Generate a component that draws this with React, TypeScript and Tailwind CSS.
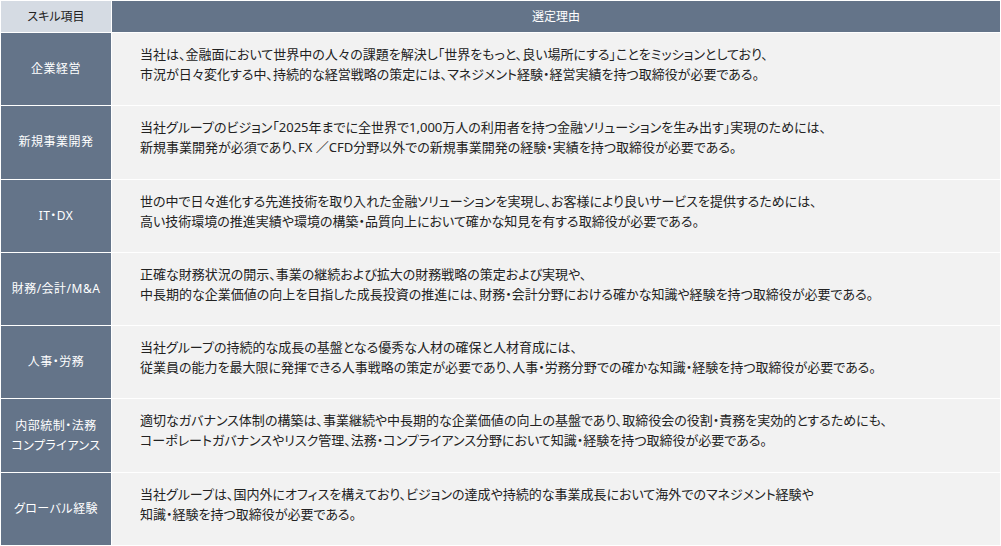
const rows: { skill: string[]; reason: string[] }[] = [
  {
    skill: ['企業経営'],
    reason: [
      '当社は、金融面において世界中の人々の課題を解決し「世界をもっと、良い場所にする」ことをミッションとしており、',
      '市況が日々変化する中、持続的な経営戦略の策定には、マネジメント経験・経営実績を持つ取締役が必要である。',
    ],
  },
  {
    skill: ['新規事業開発'],
    reason: [
      '当社グループのビジョン「2025年までに全世界で1,000万人の利用者を持つ金融ソリューションを生み出す」実現のためには、',
      '新規事業開発が必須であり、FX ／CFD分野以外での新規事業開発の経験・実績を持つ取締役が必要である。',
    ],
  },
  {
    skill: ['IT・DX'],
    reason: [
      '世の中で日々進化する先進技術を取り入れた金融ソリューションを実現し、お客様により良いサービスを提供するためには、',
      '高い技術環境の推進実績や環境の構築・品質向上において確かな知見を有する取締役が必要である。',
    ],
  },
  {
    skill: ['財務/会計/M&A'],
    reason: [
      '正確な財務状況の開示、事業の継続および拡大の財務戦略の策定および実現や、',
      '中長期的な企業価値の向上を目指した成長投資の推進には、財務・会計分野における確かな知識や経験を持つ取締役が必要である。',
    ],
  },
  {
    skill: ['人事・労務'],
    reason: [
      '当社グループの持続的な成長の基盤となる優秀な人材の確保と人材育成には、',
      '従業員の能力を最大限に発揮できる人事戦略の策定が必要であり、人事・労務分野での確かな知識・経験を持つ取締役が必要である。',
    ],
  },
  {
    skill: ['内部統制・法務', 'コンプライアンス'],
    reason: [
      '適切なガバナンス体制の構築は、事業継続や中長期的な企業価値の向上の基盤であり、取締役会の役割・責務を実効的とするためにも、',
      'コーポレートガバナンスやリスク管理、法務・コンプライアンス分野において知識・経験を持つ取締役が必要である。',
    ],
  },
  {
    skill: ['グローバル経験'],
    reason: [
      '当社グループは、国内外にオフィスを構えており、ビジョンの達成や持続的な事業成長において海外でのマネジメント経験や',
      '知識・経験を持つ取締役が必要である。',
    ],
  },
];

export default function App() {
  return (
    <div className="h-[546px] w-[1001px] bg-white p-px font-['Noto_Sans','Noto_Sans_CJK_JP',sans-serif] [font-feature-settings:'palt']">
      <div className="grid h-full grid-cols-[110px_1fr] grid-rows-[31px_repeat(7,1fr)] gap-px">
        <div className="flex items-center justify-center bg-[#d5dbe3] text-[12px] text-[#222]">
          スキル項目
        </div>
        <div className="flex items-center justify-center bg-[#647489] text-[12px] text-white">
          選定理由
        </div>
        {rows.map((row) => (
          <div key={row.skill.join()} className="contents">
            <div className="flex flex-col items-center justify-center bg-[#647489] text-[12px] leading-[20px] tracking-[0.04em] text-white">
              {row.skill.map((s) => (
                <span key={s}>{s}</span>
              ))}
            </div>
            <div className="bg-[#f2f2f2] pl-[28px] pt-[11px] text-[13px] leading-[20px] text-[#222]">
              {row.reason.map((line) => (
                <p key={line}>{line}</p>
              ))}
            </div>
          </div>
        ))}
      </div>
    </div>
  );
}
